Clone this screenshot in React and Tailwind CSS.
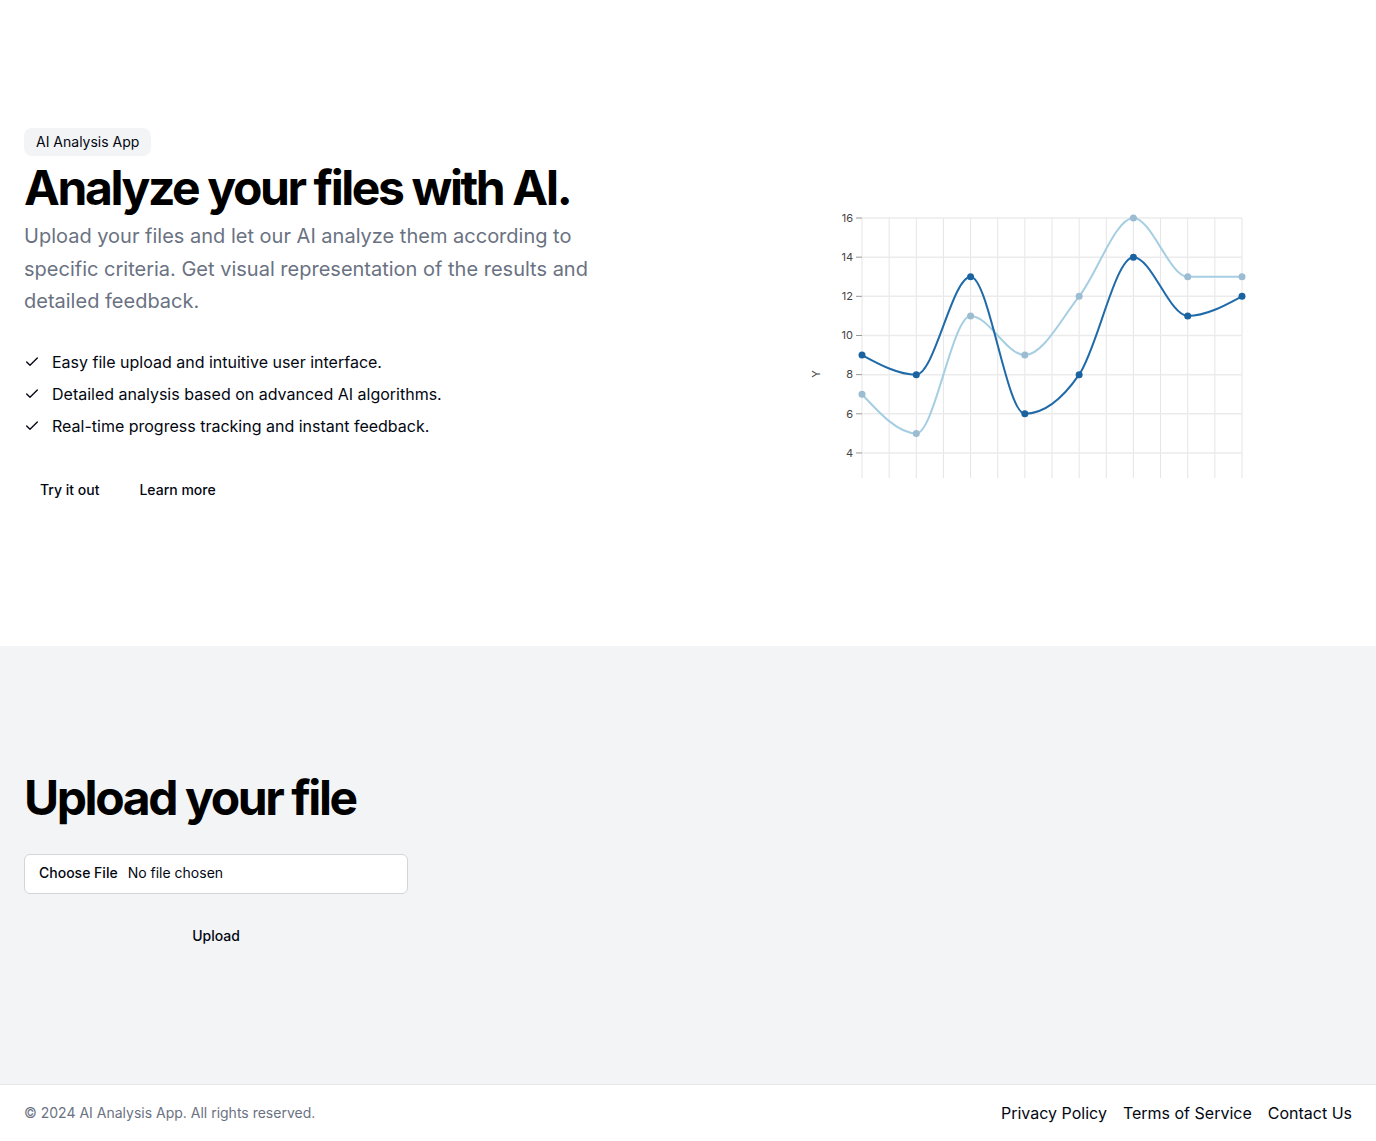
import { Check } from 'lucide-react';

const dark = [9, 8, 13, 6, 8, 14, 11, 12];
const light = [7, 5, 11, 9, 12, 16, 13, 13];

// chart geometry inside a 640x382 svg (left column top = 128, right column left = 712)
const X0 = 150;
const X1 = 530;
const Y_TOP = 90;
const UNIT = 19.58;
const Y_BOTTOM = 350;

const px = (i) => X0 + (i * (X1 - X0)) / 7;
const py = (v) => Y_TOP + (16 - v) * UNIT;

// d3-style monotoneX curve
function monotonePath(values) {
  const pts = values.map((v, i) => [px(i), py(v)]);
  const n = pts.length;
  const sign = (x) => (x < 0 ? -1 : 1);
  const s = [];
  for (let i = 0; i < n - 1; i++) {
    s.push((pts[i + 1][1] - pts[i][1]) / (pts[i + 1][0] - pts[i][0]));
  }
  const t = new Array(n).fill(0);
  for (let i = 1; i < n - 1; i++) {
    const h0 = pts[i][0] - pts[i - 1][0];
    const h1 = pts[i + 1][0] - pts[i][0];
    const p = (s[i - 1] * h1 + s[i] * h0) / (h0 + h1);
    t[i] = (sign(s[i - 1]) + sign(s[i])) * Math.min(Math.abs(s[i - 1]), Math.abs(s[i]), 0.5 * Math.abs(p)) || 0;
  }
  t[0] = (3 * s[0] - t[1]) / 2;
  t[n - 1] = (3 * s[n - 2] - t[n - 2]) / 2;
  let d = `M${pts[0][0]},${pts[0][1]}`;
  for (let i = 0; i < n - 1; i++) {
    const dx = (pts[i + 1][0] - pts[i][0]) / 3;
    d += ` C${pts[i][0] + dx},${pts[i][1] + dx * t[i]} ${pts[i + 1][0] - dx},${pts[i + 1][1] - dx * t[i + 1]} ${pts[i + 1][0]},${pts[i + 1][1]}`;
  }
  return d;
}

function Chart() {
  const ticks = [4, 6, 8, 10, 12, 14, 16];
  const vlines = Array.from({ length: 15 }, (_, i) => X0 + (i * (X1 - X0)) / 14);
  return (
    <svg width="640" height="382" viewBox="0 0 640 382" className="block">
      {vlines.map((x) => (
        <line key={x} x1={x} x2={x} y1={Y_TOP} y2={Y_BOTTOM} stroke="#e5e5e5" strokeWidth="1" />
      ))}
      {ticks.map((v) => (
        <g key={v}>
          <line x1={X0} x2={X1} y1={py(v)} y2={py(v)} stroke="#ebebeb" strokeWidth="1.5" />
          <line x1={X0 - 6} x2={X0} y1={py(v)} y2={py(v)} stroke="#999" strokeWidth="1" />
          <text x={X0 - 9} y={py(v)} dy="0.35em" textAnchor="end" fontSize="11" fill="#444" fontFamily="Inter, sans-serif">
            {v}
          </text>
        </g>
      ))}
      <text
        x="0"
        y="0"
        transform={`translate(104 246) rotate(-90)`}
        textAnchor="middle"
        dy="0.35em"
        fontSize="11"
        fill="#444"
        fontFamily="Inter, sans-serif"
      >
        Y
      </text>
      <path d={monotonePath(light)} fill="none" stroke="#a6cee3" strokeWidth="2" />
      <path d={monotonePath(dark)} fill="none" stroke="#1f6aa8" strokeWidth="2" />
      {light.map((v, i) => (
        <circle key={`l${i}`} cx={px(i)} cy={py(v)} r="3.5" fill="#9bbcd1" />
      ))}
      {dark.map((v, i) => (
        <circle key={`d${i}`} cx={px(i)} cy={py(v)} r="3.5" fill="#1b63a0" />
      ))}
    </svg>
  );
}

export default function App() {
  const features = [
    'Easy file upload and intuitive user interface.',
    'Detailed analysis based on advanced AI algorithms.',
    'Real-time progress tracking and instant feedback.'
  ];

  return (
    <div className="min-h-screen bg-white text-gray-950" style={{ fontFamily: 'Inter, "Noto Sans", sans-serif' }}>
      {/* Hero */}
      <section className="px-6 pt-32 pb-[136px]">
        <div className="grid grid-cols-2 gap-12">
          <div className="flex flex-col gap-8">
            <div className="flex flex-col items-start gap-2">
              <div className="rounded-lg bg-gray-100 px-3 py-1 text-sm">AI Analysis App</div>
              <h1 className="text-5xl leading-none font-bold tracking-tighter text-black">Analyze your files with AI.</h1>
              <p className="max-w-[600px] text-xl leading-relaxed text-gray-500">
                Upload your files and let our AI analyze them according to specific criteria. Get visual representation of
                the results and detailed feedback.
              </p>
            </div>
            <ul className="flex flex-col gap-2">
              {features.map((f) => (
                <li key={f} className="flex items-center gap-3 text-base">
                  <Check className="h-4 w-4" strokeWidth={2} />
                  {f}
                </li>
              ))}
            </ul>
            <div className="flex gap-2">
              <button className="h-10 rounded-md px-4 text-sm font-medium">Try it out</button>
              <button className="h-10 rounded-md px-4 text-sm font-medium">Learn more</button>
            </div>
          </div>
          <div className="flex items-start">
            <Chart />
          </div>
        </div>
      </section>

      {/* Upload */}
      <section className="bg-gray-100 px-6 py-32">
        <h2 className="text-5xl leading-none font-bold tracking-tighter text-black">Upload your file</h2>
        <form className="mt-8 flex w-full max-w-sm flex-col" onSubmit={(e) => e.preventDefault()}>
          <input
            type="file"
            className="h-10 w-full rounded-md border border-gray-300 bg-white px-3 py-2 text-sm file:mr-[8px] file:border-0 file:bg-transparent file:px-[2px] file:text-sm file:font-medium"
          />
          <button type="submit" className="mt-[22px] h-10 w-full rounded-md text-sm font-medium">
            Upload
          </button>
        </form>
      </section>

      {/* Footer */}
      <footer className="flex items-center justify-between border-t border-gray-200 px-6 py-4">
        <p className="text-sm text-gray-500">© 2024 AI Analysis App. All rights reserved.</p>
        <nav className="flex gap-4 text-base">
          <a href="#">Privacy Policy</a>
          <a href="#">Terms of Service</a>
          <a href="#">Contact Us</a>
        </nav>
      </footer>
    </div>
  );
}
